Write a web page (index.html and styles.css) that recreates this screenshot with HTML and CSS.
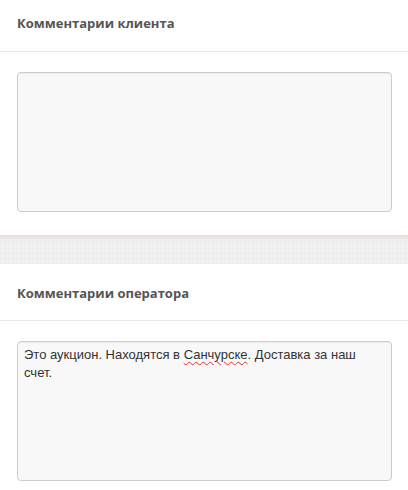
FILE: index.html
```html
<!DOCTYPE html>
<html lang="ru">
<head>
<meta charset="utf-8">
<link rel="stylesheet" href="styles.css">
</head>
<body>
<section class="panel panel-first">
  <div class="panel-head">Комментарии клиента</div>
  <div class="panel-body">
    <div class="textbox"></div>
  </div>
</section>
<div class="band"></div>
<section class="panel">
  <div class="panel-head">Комментарии оператора</div>
  <div class="panel-body">
    <div class="textbox">Это аукцион. Находятся в <span class="misspelled">Санчурске</span>. Доставка за наш счет.</div>
  </div>
</section>
</body>
</html>
```

FILE: styles.css
```css
html, body {
  margin: 0;
  padding: 0;
  background: #fff;
}
body {
  width: 408px;
  overflow: hidden;
}
.panel-head {
  box-sizing: border-box;
  height: 57px;
  padding: 20px 17px 0;
  border-bottom: 1px solid #e8e8e8;
  font-family: "Open Sans", sans-serif;
  font-weight: 700;
  font-size: 13px;
  line-height: 18px;
  color: #555;
}
.panel-first .panel-head {
  height: 52px;
  padding-top: 14px;
}
.panel-body {
  padding: 20px 16px 23px 17px;
}
.textbox {
  box-sizing: border-box;
  height: 140px;
  border: 1px solid #cccccc;
  border-radius: 4px;
  background: #f8f8f8;
  box-shadow: inset 0 1px 1px rgba(0,0,0,0.06);
  padding: 4px 6px 3px;
  font-family: "Liberation Sans", Arial, sans-serif;
  font-size: 13px;
  line-height: 18px;
  color: #333;
}
.misspelled {
  text-decoration: underline wavy #e03030;
  text-decoration-thickness: 1px;
  text-underline-offset: 2px;
}
.band {
  height: 29px;
  background:
    linear-gradient(to bottom, rgba(232,196,190,0.5) 0, rgba(240,222,220,0.25) 4px, rgba(255,255,255,0) 10px),
    repeating-linear-gradient(90deg, rgba(0,0,0,0.012) 0 1px, transparent 1px 4px),
    repeating-linear-gradient(0deg, rgba(0,0,0,0.012) 0 1px, transparent 1px 5px),
    #f1f1f1;
}
```
